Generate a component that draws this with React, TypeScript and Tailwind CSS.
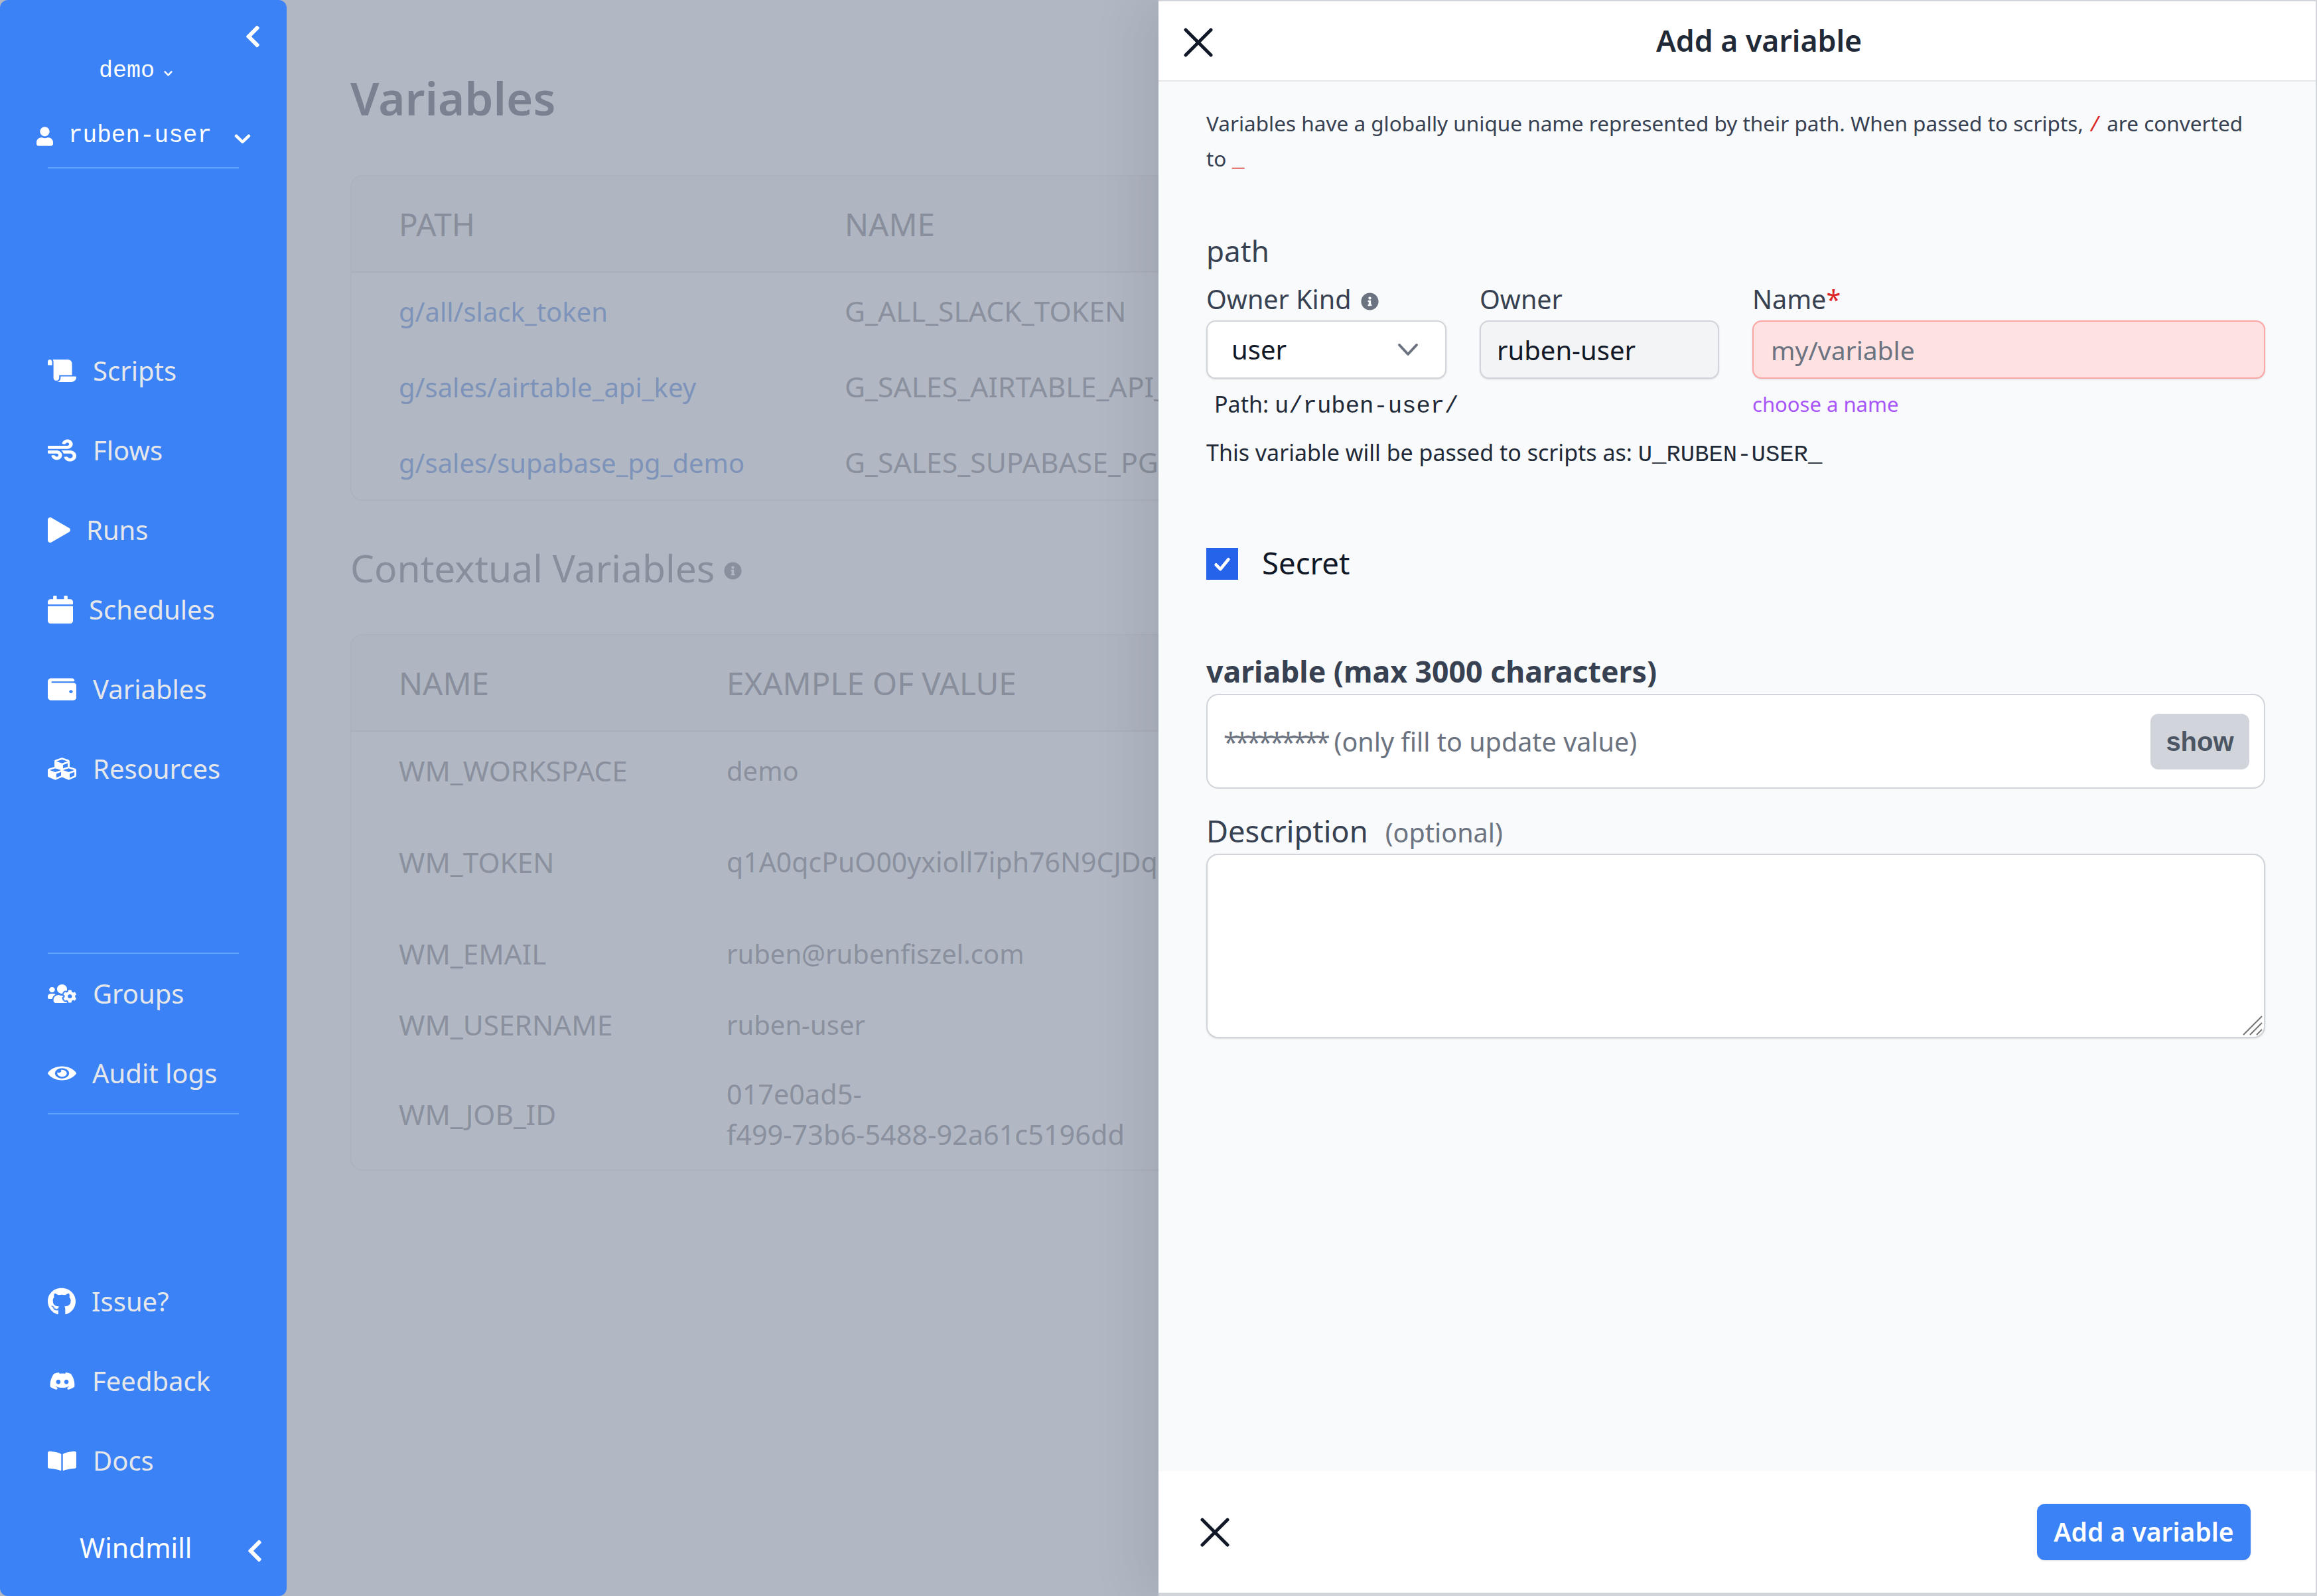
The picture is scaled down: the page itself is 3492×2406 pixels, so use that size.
import {
  FaBookOpen,
  FaCalendar,
  FaChevronLeft,
  FaCubes,
  FaDiscord,
  FaEye,
  FaGithub,
  FaInfoCircle,
  FaPlay,
  FaScroll,
  FaUser,
  FaUsersCog,
  FaWallet,
  FaWind,
} from "react-icons/fa";
import type { ReactNode } from "react";

const mono = "font-['Liberation_Mono',monospace]";
// the nav icons are stretched a little in the original
const fit = "none";

function NavItem({ icon, label, gap }: { icon: ReactNode; label: string; gap: string }) {
  return (
    <div className={`flex h-[120px] items-center pl-[72px] text-[#e5e7eb] text-[40px] ${gap}`}>
      <span className="text-white flex items-center">{icon}</span>
      <span>{label}</span>
    </div>
  );
}

function Caret({ className, width }: { className: string; width: number }) {
  return (
    <svg viewBox="0 0 24 16" className={className} fill="none" stroke="white" strokeWidth={width} strokeLinecap="round" strokeLinejoin="round" preserveAspectRatio="none">
      <path d="M3 4l9 9 9-9" />
    </svg>
  );
}

function Sidebar() {
  return (
    <aside className="w-[432px] shrink-0 h-full rounded-[12px] bg-[#3b82f6] flex flex-col relative z-20">
      <div className="h-[499px] shrink-0 flex flex-col">
        <div className="h-[82px] pt-[36px] pr-[39px] flex justify-end">
          <FaChevronLeft className="text-white w-[24px] h-[38px]" />
        </div>
        <div className={`mt-[3px] pl-[149px] h-[44px] flex items-center gap-[14px] text-white text-[35px] ${mono}`}>
          <span>demo</span>
          <Caret className="w-[13px] h-[9px] mt-[6px]" width={4.5} />
        </div>
        <div className={`mt-[54px] pl-[55px] h-[44px] flex items-center text-white text-[36px] ${mono}`}>
          <FaUser className="w-[25px] h-[29px]" />
          <span className="ml-[23px]">ruben-user</span>
          <Caret className="ml-[34px] w-[25px] h-[16px] mt-[8px]" width={4.5} />
        </div>
        <div className="mx-[72px] mt-[25px] border-t-2 border-[#60a5fa]" />
      </div>

      <NavItem icon={<FaScroll preserveAspectRatio={fit} className="w-[43px] h-[34px]" />} label="Scripts" gap="gap-[25px]" />
      <NavItem icon={<FaWind preserveAspectRatio={fit} className="w-[43px] h-[38px]" />} label="Flows" gap="gap-[25px]" />
      <NavItem icon={<FaPlay preserveAspectRatio={fit} className="w-[34px] h-[38px]" />} label="Runs" gap="gap-[24px]" />
      <NavItem icon={<FaCalendar preserveAspectRatio={fit} className="w-[38px] h-[42px]" />} label="Schedules" gap="gap-[24px]" />
      <NavItem icon={<FaWallet preserveAspectRatio={fit} className="w-[43px] h-[38px]" />} label="Variables" gap="gap-[25px]" />
      <NavItem icon={<FaCubes preserveAspectRatio={fit} className="w-[43px] h-[38px]" />} label="Resources" gap="gap-[25px]" />

      <div className="mx-[72px] mt-[217px] border-t-2 border-[#60a5fa]" />
      <NavItem icon={<FaUsersCog preserveAspectRatio={fit} className="w-[43px] h-[32px]" />} label="Groups" gap="gap-[25px]" />
      <NavItem icon={<FaEye preserveAspectRatio={fit} className="w-[43px] h-[28px]" />} label="Audit logs" gap="gap-[24px]" />
      <div className="mx-[72px] border-t-2 border-[#60a5fa]" />

      <div className="mt-[222px]">
        <NavItem icon={<FaGithub preserveAspectRatio={fit} className="w-[42px] h-[42px]" />} label="Issue?" gap="gap-[24px]" />
        <NavItem icon={<FaDiscord preserveAspectRatio={fit} className="w-[40px] h-[30px] ml-[2px]" />} label="Feedback" gap="gap-[25px]" />
        <NavItem icon={<FaBookOpen preserveAspectRatio={fit} className="w-[43px] h-[33px]" />} label="Docs" gap="gap-[25px]" />
      </div>

      <div className="mt-[32px] h-[80px] pl-[120px] flex items-center text-white text-[41px]">
        <span>Windmill</span>
        <FaChevronLeft className="ml-[83px] mt-[8px] w-[24px] h-[38px] shrink-0" />
      </div>
    </aside>
  );
}

function BgTable({ head, rows, nameW, link }: { head: string[]; rows: { a: string; b: ReactNode; h: string }[]; nameW: string; link?: boolean }) {
  return (
    <div className="rounded-[18px] border-2 border-[#acb2be] w-[1700px] text-[40px] text-[#8a909d] whitespace-nowrap">
      <div className="flex h-[145px] items-center pl-[71px] bg-[#afb5c1] rounded-t-[18px] border-b-2 border-[#a9afbc] text-[#888e9b] text-[47.5px]">
        <div className={nameW}>{head[0]}</div>
        <div>{head[1]}</div>
      </div>
      {rows.map((r) => (
        <div key={r.a} className={`flex items-center pl-[71px] pt-[3px] ${r.h}`}>
          <div className={`${nameW} ${link ? "text-[#7d93b9]" : "text-[42.4px]"}`}>{r.a}</div>
          <div className="leading-[60px]">{r.b}</div>
        </div>
      ))}
    </div>
  );
}

function Background() {
  return (
    <main className="flex-1 min-w-0 h-full pl-[96px] pt-[98px] overflow-hidden text-[#888e9b]">
      <h1 className="text-[69px] leading-[98px] font-semibold text-[#7a8190]">Variables</h1>
      <div className="mt-[68px]">
        <BgTable
          head={["PATH", "NAME"]}
          nameW="w-[672px]"
          link
          rows={[
            { a: "g/all/slack_token", b: <span className="text-[42.7px]">G_ALL_SLACK_TOKEN</span>, h: "h-[114px]" },
            { a: "g/sales/airtable_api_key", b: <span className="text-[42.7px]">G_SALES_AIRTABLE_API_KEY</span>, h: "h-[114px]" },
            { a: "g/sales/supabase_pg_demo", b: <span className="text-[42.7px]">G_SALES_SUPABASE_PG_DEMO</span>, h: "h-[114px]" },
          ]}
        />
      </div>
      <h2 className="mt-[56px] text-[57px] leading-[90px] flex items-center gap-[14px]">
        Contextual Variables
        <FaInfoCircle className="w-[27px] h-[27px] mt-[8px] text-[#8a909d]" />
      </h2>
      <div className="mt-[55px]">
        <BgTable
          head={["NAME", "EXAMPLE OF VALUE"]}
          nameW="w-[494px]"
          rows={[
            { a: "WM_WORKSPACE", b: "demo", h: "h-[114px]" },
            { a: "WM_TOKEN", b: <span className="text-[41px]">q1A0qcPuO00yxioll7iph76N9CJDqn</span>, h: "h-[162px]" },
            { a: "WM_EMAIL", b: "ruben@rubenfiszel.com", h: "h-[114px]" },
            { a: "WM_USERNAME", b: "ruben-user", h: "h-[100px]" },
            { a: "WM_JOB_ID", b: (<span className="text-[41.4px]">017e0ad5-<br />f499-73b6-5488-92a61c5196dd</span>), h: "h-[170px]" },
          ]}
        />
      </div>
    </main>
  );
}

function CloseIcon({ className }: { className: string }) {
  return (
    <svg viewBox="0 0 44 44" className={className} fill="none" stroke="#111827" strokeWidth="5" strokeLinecap="round">
      <path d="M3 3l38 38M41 3 3 41" />
    </svg>
  );
}

function Drawer() {
  return (
    <section className="absolute z-30 top-0 bottom-0 left-[1746px] right-0 flex flex-col bg-[#f9fafb] border-t-2 border-r-2 border-b-[5px] border-[#d1d5db] border-l-0 shadow-[-30px_0_70px_rgba(0,0,0,0.08)]">
      <header className="relative h-[121px] shrink-0 bg-white border-b-2 border-[#e5e7eb] flex items-center justify-center">
        <CloseIcon className="absolute left-[38px] top-[40px] w-[44px] h-[44px]" />
        <h2 className="text-[44.6px] font-semibold text-[#1f2937] ml-[66px]">Add a variable</h2>
      </header>

      <div className="flex-1 min-h-0 pl-[72px] pr-[76px] text-[#374151]">
        <p className="mt-[36px] text-[31.5px] leading-[53px]">
          Variables have a globally unique name represented by their path. When passed to scripts, <span className={`text-[#dc2626] leading-[0] ${mono}`}>/</span> are converted to <span className={`text-[#dc2626] leading-[0] ${mono}`}>_</span>
        </p>

        <div className="mt-[85px] text-[44px] leading-[56px]">path</div>

        <div className="mt-[18px] flex gap-[50px]">
          <div className="w-[362px] shrink-0">
            <div className="flex items-center gap-[14px] text-[39.5px] leading-[54px]">
              Owner Kind
              <FaInfoCircle className="w-[27px] h-[27px] mt-[6px] text-[#6b7280]" />
            </div>
            <div className="mt-[5px] h-[88px] rounded-[14px] border-2 border-[#d1d5db] bg-white shadow-sm flex items-center justify-between pl-[36px] pr-[40px] text-[40px] text-[#111827]">
              user
              <svg viewBox="0 0 32 20" className="w-[32px] h-[20px]" fill="none" stroke="#6b7280" strokeWidth="4" strokeLinecap="round" strokeLinejoin="round">
                <path d="M3 3l13 14L29 3" />
              </svg>
            </div>
            <div className="mt-[14px] ml-[12px] text-[34px] leading-[48px] whitespace-nowrap text-[#1f2937]">
              Path: <span className={`text-[35.6px] leading-[0] ${mono}`}>u/ruben-user/</span>
            </div>
          </div>
          <div className="w-[361px] shrink-0">
            <div className="text-[39.5px] leading-[54px]">Owner</div>
            <input readOnly value="ruben-user" className="mt-[5px] w-full h-[88px] rounded-[14px] border-2 border-[#d1d5db] bg-[#f3f4f6] shadow-sm px-[24px] text-[40px] text-[#111827]" />
          </div>
          <div className="flex-1 min-w-0">
            <div className="text-[39.5px] leading-[54px]">
              Name<span className="text-[#dc2626]">*</span>
            </div>
            <input readOnly placeholder="my/variable" className="mt-[5px] w-full h-[88px] rounded-[14px] border-2 border-[#fca5a5] bg-[#fee2e2] shadow-sm px-[26px] text-[39px] placeholder:text-[#6b7280]" />
            <div className="mt-[14px] text-[31px] leading-[48px] text-[#a855f7]">choose a name</div>
          </div>
        </div>

        <div className="mt-[25px] text-[34px] leading-[48px] text-[#1f2937]">
          This variable will be passed to scripts as: <span className={`text-[35.6px] leading-[0] ${mono}`}>U_RUBEN-USER_</span>
        </div>

        <div className="mt-[120px] flex items-center gap-[36px] h-[48px]">
          <div className="w-[48px] h-[48px] bg-[#2563eb] flex items-center justify-center">
            <svg viewBox="0 0 24 24" className="w-[32px] h-[32px]" fill="none" stroke="white" strokeWidth="3.5" strokeLinecap="round" strokeLinejoin="round">
              <path d="M5 13l5 5L19 7" />
            </svg>
          </div>
          <span className="text-[45.5px] text-[#111827] mt-[-4px]">Secret</span>
        </div>

        <div className="mt-[110px] text-[44.6px] leading-[56px] font-bold text-[#374151]">variable (max 3000 characters)</div>
        <div className="mt-[6px] h-[143px] rounded-[18px] border-2 border-[#d1d5db] bg-white flex items-center justify-between pl-[24px] pr-[22px]">
          <span className="text-[39.5px] text-[#6b7280] mt-[2px]"><span className="tracking-[-4.4px]">*********</span> (only fill to update value)</span>
          <button className="w-[149px] h-[84px] rounded-[12px] bg-[#d1d5db] text-[#4b5563] text-[40px] font-bold font-['Liberation_Sans',sans-serif]">show</button>
        </div>

        <div className="mt-[34px] flex items-baseline gap-[26px]">
          <span className="text-[45.3px] leading-[60px]">Description</span>
          <span className="text-[39.5px] text-[#6b7280]">(optional)</span>
        </div>
        <div className="relative mt-[2px] h-[278px]">
          <textarea readOnly className="block w-full h-full resize-none rounded-[18px] border-2 border-[#d1d5db] bg-white shadow-sm" />
          <svg viewBox="0 0 30 30" className="absolute right-[4px] bottom-[4px] w-[30px] h-[30px]" fill="none" stroke="#757575" strokeWidth="2">
            <path d="M1 29 29 1M11 29 29 11M21 29l8-8" />
          </svg>
        </div>
      </div>

      <footer className="relative h-[183px] shrink-0 bg-white flex items-center justify-end pr-[98px]">
        <CloseIcon className="absolute left-[63px] top-[70px] w-[44px] h-[44px]" />
        <button className="w-[322px] h-[85px] rounded-[12px] bg-[#3b82f6] text-white text-[39px] font-semibold shadow-sm">Add a variable</button>
      </footer>
    </section>
  );
}

export default function App() {
  return (
    <div className="relative flex w-[3492px] h-[2406px] overflow-hidden bg-[#b1b8c4] font-['Noto_Sans',sans-serif]">
      <Sidebar />
      <Background />
      <Drawer />
    </div>
  );
}
